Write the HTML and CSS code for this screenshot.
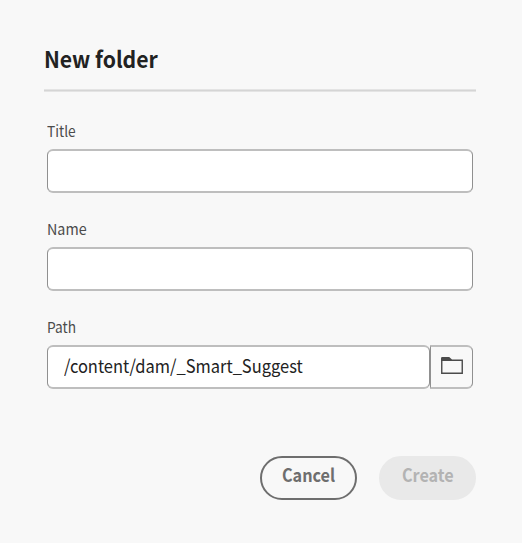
FILE: index.html
```html
<!DOCTYPE html>
<html lang="en">
<head>
<meta charset="utf-8">
<title>New folder</title>
<link rel="stylesheet" href="styles.css">
</head>
<body>
<form class="dialog">
  <h1 class="heading"><span class="heading-text">New folder</span></h1>
  <div class="fields">
    <div class="field"><label class="label" for="title"><span class="narrow">Title</span></label><input class="input" id="title" type="text"></div>
    <div class="field"><label class="label" for="name"><span class="narrow name-text">Name</span></label><input class="input" id="name" type="text"></div>
    <div class="field">
      <label class="label"><span class="narrow">Path</span></label>
      <div class="path-row">
        <div class="input path"><span class="narrow">/content/dam/_Smart_Suggest</span></div>
        <button class="browse" type="button" aria-label="Browse">
          <svg width="24" height="20" viewBox="0 0 24 20"><path d="M1.75 3.5V17.25H22.25V4.25H12" fill="none" stroke="#4b4b4b" stroke-width="1.4"/><path d="M1 5V2.2Q1 1 2.2 1H9.2L12 3.6V5Z" fill="#4b4b4b"/></svg>
        </button>
      </div>
    </div>
  </div>
  <div class="actions">
    <button class="button cancel" type="button"><span class="button-text">Cancel</span></button>
    <button class="button create" type="button" disabled><span class="button-text">Create</span></button>
  </div>
</form>
</body>
</html>
```
FILE: styles.css
```css
* { box-sizing: border-box; }
body {
  margin: 0;
  background: #f8f8f8;
  font-family: "Noto Sans CJK JP", "Noto Sans", sans-serif;
}
.dialog { width: 522px; height: 543px; padding: 40px 46px 0 44px; }
.heading {
  margin: 0 0 1px;
  height: 51px;
  border-bottom: 1px solid #d5d5d5;
  box-shadow: 0 1px #e4e4e4, inset 0 -1px #e4e4e4;
  color: #222;
  font-size: 22.5px;
  font-weight: 700;
  line-height: 36px;
}
.heading-text { display: inline-block; transform: scaleX(0.94); transform-origin: left; }
.fields { padding: 26px 3px 0; }
.field { height: 98px; }
.label {
  display: block;
  height: 31px;
  color: #4b4b4b;
  font-size: 15px;
  line-height: 26px;
}
.narrow { display: inline-block; transform: scaleX(0.915); transform-origin: left; }
.name-text { transform: scaleX(0.955); }
.input {
  display: block;
  width: 100%;
  height: 44px;
  padding: 0 16px;
  border: 1px solid #909090;
  border-top: 2px solid #bebebe;
  border-bottom: 2px solid #bebebe;
  border-radius: 6px;
  background: #fff;
  color: #222;
  font-size: 18px;
}
.path-row { display: flex; }
.path { width: 383px; line-height: 36px; white-space: nowrap; }
.browse {
  display: flex;
  align-items: center;
  justify-content: center;
  width: 43px;
  height: 44px;
  padding: 0 0 2px;
  border: 1px solid #909090;
  border-top: 2px solid #bebebe;
  border-bottom: 2px solid #bebebe;
  border-radius: 0 6px 6px 0;
  background: #f8f8f8;
}
.actions { display: flex; justify-content: flex-end; gap: 22px; padding-top: 44px; }
.button {
  width: 97px;
  height: 44px;
  padding: 0 0 7px;
  border: 2px solid #6e6e6e;
  border-radius: 22px;
  background: transparent;
  color: #6e6e6e;
  font: 700 18px/33px "Noto Sans CJK JP", sans-serif;
}
.button-text { display: inline-block; transform: scaleX(0.9); }
.create { border-color: #e9e9e9; background: #e9e9e9; color: #b3b3b3; }
```
